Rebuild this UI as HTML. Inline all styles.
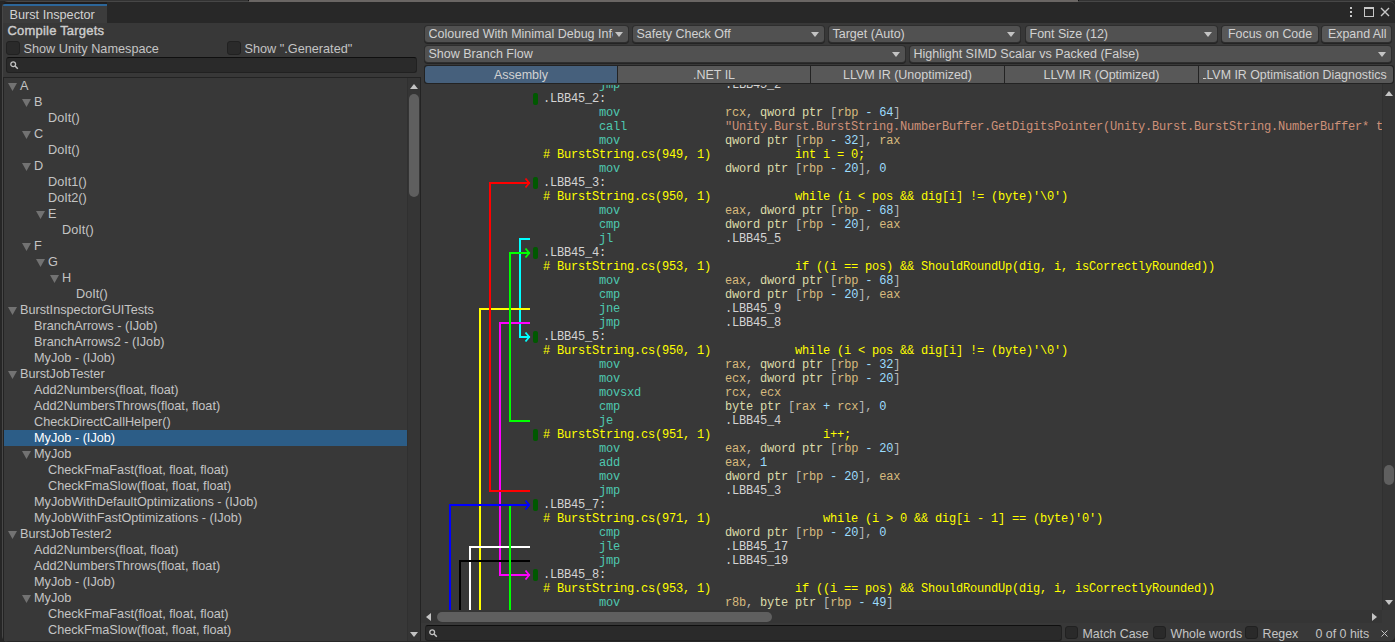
<!DOCTYPE html>
<html><head><meta charset="utf-8"><style>
html,body{margin:0;padding:0;width:1395px;height:642px;overflow:hidden;background:#232323}
.b{position:absolute}
.t{position:absolute;white-space:pre;line-height:20px;font-family:'Liberation Sans', sans-serif}
.m{position:absolute;white-space:pre;line-height:14px;font-size:12px;letter-spacing:-0.200px;font-family:'Liberation Mono', monospace}
svg{display:block}
</style></head><body>
<div class="b" style="left:0px;top:0px;width:1395px;height:642px;background:#262626"></div><div class="b" style="left:0px;top:0px;width:248px;height:1px;background:#333333"></div><div class="b" style="left:248px;top:0px;width:1px;height:2px;background:#111"></div><div class="b" style="left:249px;top:0px;width:829px;height:2px;background:#6a6664"></div><div class="b" style="left:1078px;top:0px;width:1px;height:1px;background:#111"></div><div class="b" style="left:1079px;top:0px;width:316px;height:1px;background:#333333"></div><div class="b" style="left:2px;top:1px;width:1393px;height:641px;background:#282828;border-left:1px solid #474747;border-top:1px solid #474747;border-radius:6px 6px 5px 6px;box-sizing:border-box"></div><div class="b" style="left:249px;top:1px;width:829px;height:1px;background:#6a6664"></div><div class="b" style="left:3px;top:23px;width:1392px;height:618px;background:#383838;border-radius:0 0 5px 5px"></div><div class="b" style="left:3px;top:2px;width:104px;height:21px;background:#3c3c3c;border-radius:5px 0 0 0"></div><div class="b" style="left:3px;top:2px;width:104px;height:2px;background:#1f1d1d;border-radius:5px 0 0 0"></div><div class="b" style="left:3px;top:4px;width:104px;height:2px;background:#2c6699;border-radius:2px 0 0 0"></div><div class="t" style="left:9.5px;top:4.60px;font-size:12.7px;color:#d2d2d2;font-weight:400;">Burst Inspector</div><div class="b" style="left:1350px;top:7px;width:2px;height:2px;background:#c8c8c8"></div><div class="b" style="left:1350px;top:11px;width:2px;height:2px;background:#c8c8c8"></div><div class="b" style="left:1350px;top:15px;width:2px;height:2px;background:#c8c8c8"></div><div class="b" style="left:1364px;top:7px;width:10px;height:10px;border:1px solid #c8c8c8;border-top-width:2px;box-sizing:border-box"></div><svg class="b" style="left:1380px;top:7px" width="10" height="10"><path d="M1 1L9 9M9 1L1 9" stroke="#c8c8c8" stroke-width="1.4"/></svg><div class="t" style="left:7.5px;top:20.50px;font-size:13px;color:#cccccc;font-weight:400;letter-spacing:0.2px;-webkit-text-stroke:0.4px #cccccc">Compile Targets</div><div class="b" style="left:6px;top:41px;width:14px;height:14px;background:#2a2a2a;border:1px solid #212121;box-sizing:border-box;border-radius:3px"></div><div class="t" style="left:23.5px;top:38.60px;font-size:12.7px;color:#c4c4c4;font-weight:400;">Show Unity Namespace</div><div class="b" style="left:227px;top:41px;width:14px;height:14px;background:#2a2a2a;border:1px solid #212121;box-sizing:border-box;border-radius:3px"></div><div class="t" style="left:244.5px;top:38.60px;font-size:12.7px;color:#c4c4c4;font-weight:400;">Show &quot;.Generated&quot;</div><div class="b" style="left:6px;top:57px;width:411px;height:16px;background:#2a2a2a;border:1px solid #212121;border-top-color:#0f0f0f;box-sizing:border-box;border-radius:3px"></div><svg class="b" style="left:10px;top:61px" width="9" height="9"><circle cx="3.2" cy="3.2" r="2.4" fill="none" stroke="#c4c4c4" stroke-width="1.3"/><path d="M4.8 4.8L7.8 7.8" stroke="#c4c4c4" stroke-width="1.5"/></svg><div class="b" style="left:3px;top:77px;width:418px;height:564px;background:#383838;border-top:1px solid #232323;border-left:1px solid #232323;border-right:1px solid #232323;box-sizing:border-box"></div><div class="b" style="left:4px;top:78px;width:403px;height:563px;overflow:hidden"><svg class="b" style="left:4px;top:5px" width="9" height="8"><path d="M0 0H9L4.5 8Z" fill="#727272"/></svg><div class="t" style="left:16px;top:-2.40px;font-size:12.7px;color:#c4c4c4;font-weight:400;">A</div><svg class="b" style="left:18px;top:21px" width="9" height="8"><path d="M0 0H9L4.5 8Z" fill="#727272"/></svg><div class="t" style="left:30px;top:13.60px;font-size:12.7px;color:#c4c4c4;font-weight:400;">B</div><div class="t" style="left:44px;top:29.60px;font-size:12.7px;color:#c4c4c4;font-weight:400;">DoIt()</div><svg class="b" style="left:18px;top:53px" width="9" height="8"><path d="M0 0H9L4.5 8Z" fill="#727272"/></svg><div class="t" style="left:30px;top:45.60px;font-size:12.7px;color:#c4c4c4;font-weight:400;">C</div><div class="t" style="left:44px;top:61.60px;font-size:12.7px;color:#c4c4c4;font-weight:400;">DoIt()</div><svg class="b" style="left:18px;top:85px" width="9" height="8"><path d="M0 0H9L4.5 8Z" fill="#727272"/></svg><div class="t" style="left:30px;top:77.60px;font-size:12.7px;color:#c4c4c4;font-weight:400;">D</div><div class="t" style="left:44px;top:93.60px;font-size:12.7px;color:#c4c4c4;font-weight:400;">DoIt1()</div><div class="t" style="left:44px;top:109.60px;font-size:12.7px;color:#c4c4c4;font-weight:400;">DoIt2()</div><svg class="b" style="left:32px;top:133px" width="9" height="8"><path d="M0 0H9L4.5 8Z" fill="#727272"/></svg><div class="t" style="left:44px;top:125.60px;font-size:12.7px;color:#c4c4c4;font-weight:400;">E</div><div class="t" style="left:58px;top:141.60px;font-size:12.7px;color:#c4c4c4;font-weight:400;">DoIt()</div><svg class="b" style="left:18px;top:165px" width="9" height="8"><path d="M0 0H9L4.5 8Z" fill="#727272"/></svg><div class="t" style="left:30px;top:157.60px;font-size:12.7px;color:#c4c4c4;font-weight:400;">F</div><svg class="b" style="left:32px;top:181px" width="9" height="8"><path d="M0 0H9L4.5 8Z" fill="#727272"/></svg><div class="t" style="left:44px;top:173.60px;font-size:12.7px;color:#c4c4c4;font-weight:400;">G</div><svg class="b" style="left:46px;top:197px" width="9" height="8"><path d="M0 0H9L4.5 8Z" fill="#727272"/></svg><div class="t" style="left:58px;top:189.60px;font-size:12.7px;color:#c4c4c4;font-weight:400;">H</div><div class="t" style="left:72px;top:205.60px;font-size:12.7px;color:#c4c4c4;font-weight:400;">DoIt()</div><svg class="b" style="left:4px;top:229px" width="9" height="8"><path d="M0 0H9L4.5 8Z" fill="#727272"/></svg><div class="t" style="left:16px;top:221.60px;font-size:12.7px;color:#c4c4c4;font-weight:400;">BurstInspectorGUITests</div><div class="t" style="left:30px;top:237.60px;font-size:12.7px;color:#c4c4c4;font-weight:400;">BranchArrows - (IJob)</div><div class="t" style="left:30px;top:253.60px;font-size:12.7px;color:#c4c4c4;font-weight:400;">BranchArrows2 - (IJob)</div><div class="t" style="left:30px;top:269.60px;font-size:12.7px;color:#c4c4c4;font-weight:400;">MyJob - (IJob)</div><svg class="b" style="left:4px;top:293px" width="9" height="8"><path d="M0 0H9L4.5 8Z" fill="#727272"/></svg><div class="t" style="left:16px;top:285.60px;font-size:12.7px;color:#c4c4c4;font-weight:400;">BurstJobTester</div><div class="t" style="left:30px;top:301.60px;font-size:12.7px;color:#c4c4c4;font-weight:400;">Add2Numbers(float, float)</div><div class="t" style="left:30px;top:317.60px;font-size:12.7px;color:#c4c4c4;font-weight:400;">Add2NumbersThrows(float, float)</div><div class="t" style="left:30px;top:333.60px;font-size:12.7px;color:#c4c4c4;font-weight:400;">CheckDirectCallHelper()</div><div class="b" style="left:0px;top:352px;width:403px;height:16px;background:#2c5d87"></div><div class="t" style="left:30px;top:349.60px;font-size:12.7px;color:#ffffff;font-weight:400;">MyJob - (IJob)</div><svg class="b" style="left:18px;top:373px" width="9" height="8"><path d="M0 0H9L4.5 8Z" fill="#727272"/></svg><div class="t" style="left:30px;top:365.60px;font-size:12.7px;color:#c4c4c4;font-weight:400;">MyJob</div><div class="t" style="left:44px;top:381.60px;font-size:12.7px;color:#c4c4c4;font-weight:400;">CheckFmaFast(float, float, float)</div><div class="t" style="left:44px;top:397.60px;font-size:12.7px;color:#c4c4c4;font-weight:400;">CheckFmaSlow(float, float, float)</div><div class="t" style="left:30px;top:413.60px;font-size:12.7px;color:#c4c4c4;font-weight:400;">MyJobWithDefaultOptimizations - (IJob)</div><div class="t" style="left:30px;top:429.60px;font-size:12.7px;color:#c4c4c4;font-weight:400;">MyJobWithFastOptimizations - (IJob)</div><svg class="b" style="left:4px;top:453px" width="9" height="8"><path d="M0 0H9L4.5 8Z" fill="#727272"/></svg><div class="t" style="left:16px;top:445.60px;font-size:12.7px;color:#c4c4c4;font-weight:400;">BurstJobTester2</div><div class="t" style="left:30px;top:461.60px;font-size:12.7px;color:#c4c4c4;font-weight:400;">Add2Numbers(float, float)</div><div class="t" style="left:30px;top:477.60px;font-size:12.7px;color:#c4c4c4;font-weight:400;">Add2NumbersThrows(float, float)</div><div class="t" style="left:30px;top:493.60px;font-size:12.7px;color:#c4c4c4;font-weight:400;">MyJob - (IJob)</div><svg class="b" style="left:18px;top:517px" width="9" height="8"><path d="M0 0H9L4.5 8Z" fill="#727272"/></svg><div class="t" style="left:30px;top:509.60px;font-size:12.7px;color:#c4c4c4;font-weight:400;">MyJob</div><div class="t" style="left:44px;top:525.60px;font-size:12.7px;color:#c4c4c4;font-weight:400;">CheckFmaFast(float, float, float)</div><div class="t" style="left:44px;top:541.60px;font-size:12.7px;color:#c4c4c4;font-weight:400;">CheckFmaSlow(float, float, float)</div><div class="t" style="left:30px;top:557.60px;font-size:12.7px;color:#c4c4c4;font-weight:400;">MyJobWithFastOptimizations - (IJob)</div></div><div class="b" style="left:407px;top:78px;width:13px;height:563px;background:#353535;border-left:1px solid #303030;box-sizing:border-box"></div><svg class="b" style="left:410px;top:84px" width="8" height="5"><path d="M0 5H8L4 0Z" fill="#c4c4c4"/></svg><div class="b" style="left:409px;top:94px;width:10px;height:103px;background:#5f5f5f;border-radius:5px"></div><svg class="b" style="left:410px;top:632px" width="8" height="5"><path d="M0 0H8L4 5Z" fill="#c4c4c4"/></svg><div class="b" style="left:633px;top:26px;width:191px;height:16px;background:#515151;box-shadow:0 0 0 1px #2e2e2e,0 1px 0 1px #242424;border-radius:3px"></div><div class="t" style="left:636.5px;top:23.67px;font-size:12.5px;color:#d2d2d2;font-weight:400;">Safety Check Off</div><svg class="b" style="left:811px;top:32px" width="8" height="5"><path d="M0 0H8L4 5Z" fill="#c4c4c4"/></svg><div class="b" style="left:829px;top:26px;width:191px;height:16px;background:#515151;box-shadow:0 0 0 1px #2e2e2e,0 1px 0 1px #242424;border-radius:3px"></div><div class="t" style="left:832.5px;top:23.67px;font-size:12.5px;color:#d2d2d2;font-weight:400;">Target (Auto)</div><svg class="b" style="left:1007px;top:32px" width="8" height="5"><path d="M0 0H8L4 5Z" fill="#c4c4c4"/></svg><div class="b" style="left:1026px;top:26px;width:191px;height:16px;background:#515151;box-shadow:0 0 0 1px #2e2e2e,0 1px 0 1px #242424;border-radius:3px"></div><div class="t" style="left:1029.5px;top:23.67px;font-size:12.5px;color:#d2d2d2;font-weight:400;">Font Size (12)</div><svg class="b" style="left:1204px;top:32px" width="8" height="5"><path d="M0 0H8L4 5Z" fill="#c4c4c4"/></svg><div class="b" style="left:1222px;top:26px;width:96px;height:16px;background:#585858;box-shadow:0 0 0 1px #2e2e2e,0 1px 0 1px #242424;border-radius:3px"></div><div class="t" style="left:1228.0px;top:23.70px;font-size:12.4px;color:#d2d2d2;font-weight:400;">Focus on Code</div><div class="b" style="left:1322px;top:26px;width:69px;height:16px;background:#585858;box-shadow:0 0 0 1px #2e2e2e,0 1px 0 1px #242424;border-radius:3px"></div><div class="t" style="left:1328.0px;top:23.70px;font-size:12.4px;color:#d2d2d2;font-weight:400;">Expand All</div><div class="b" style="left:425px;top:26px;width:203px;height:16px;background:#515151;box-shadow:0 0 0 1px #2e2e2e,0 1px 0 1px #242424;border-radius:3px"></div><div class="b" style="left:428.5px;top:26px;width:184.5px;height:16px;overflow:hidden"><div class="t" style="left:0px;top:-2.33px;font-size:12.5px;color:#d2d2d2;font-weight:400;">Coloured With Minimal Debug Info</div></div><svg class="b" style="left:615px;top:32px" width="8" height="5"><path d="M0 0H8L4 5Z" fill="#c4c4c4"/></svg><div class="b" style="left:425px;top:46px;width:480px;height:16px;background:#515151;box-shadow:0 0 0 1px #2e2e2e,0 1px 0 1px #242424;border-radius:3px"></div><div class="t" style="left:428.5px;top:43.67px;font-size:12.5px;color:#d2d2d2;font-weight:400;">Show Branch Flow</div><svg class="b" style="left:892px;top:52px" width="8" height="5"><path d="M0 0H8L4 5Z" fill="#c4c4c4"/></svg><div class="b" style="left:910px;top:46px;width:481px;height:16px;background:#515151;box-shadow:0 0 0 1px #2e2e2e,0 1px 0 1px #242424;border-radius:3px"></div><div class="t" style="left:913.5px;top:43.67px;font-size:12.5px;color:#d2d2d2;font-weight:400;">Highlight SIMD Scalar vs Packed (False)</div><svg class="b" style="left:1378px;top:52px" width="8" height="5"><path d="M0 0H8L4 5Z" fill="#c4c4c4"/></svg><div class="b" style="left:424px;top:65px;width:970px;height:19px;background:#232323;border-radius:3px"></div><div class="b" style="left:425px;top:66px;width:192px;height:17px;background:#46607c;border-radius:3px 0 0 3px"></div><div class="b" style="left:425px;top:66px;width:192px;height:17px;overflow:hidden;text-align:center"><div style="position:absolute;left:0;right:0;top:-1.40px;line-height:20px;font-size:12.5px;color:#d2d2d2;white-space:pre;font-family:'Liberation Sans', sans-serif">Assembly</div></div><div class="b" style="left:618px;top:66px;width:192px;height:17px;background:#585858;border-radius:0"></div><div class="b" style="left:618px;top:66px;width:192px;height:17px;overflow:hidden;text-align:center"><div style="position:absolute;left:0;right:0;top:-1.40px;line-height:20px;font-size:12.5px;color:#d2d2d2;white-space:pre;font-family:'Liberation Sans', sans-serif">.NET IL</div></div><div class="b" style="left:811px;top:66px;width:193px;height:17px;background:#585858;border-radius:0"></div><div class="b" style="left:811px;top:66px;width:193px;height:17px;overflow:hidden;text-align:center"><div style="position:absolute;left:0;right:0;top:-1.40px;line-height:20px;font-size:12.5px;color:#d2d2d2;white-space:pre;font-family:'Liberation Sans', sans-serif">LLVM IR (Unoptimized)</div></div><div class="b" style="left:1005px;top:66px;width:193px;height:17px;background:#585858;border-radius:0"></div><div class="b" style="left:1005px;top:66px;width:193px;height:17px;overflow:hidden;text-align:center"><div style="position:absolute;left:0;right:0;top:-1.40px;line-height:20px;font-size:12.5px;color:#d2d2d2;white-space:pre;font-family:'Liberation Sans', sans-serif">LLVM IR (Optimized)</div></div><div class="b" style="left:1199px;top:66px;width:194px;height:17px;background:#585858;border-radius:0 3px 3px 0"></div><div class="b" style="left:1203px;top:66px;width:186px;height:17px;overflow:hidden"><div class="t" style="left:-3.5px;top:-1.30px;font-size:12.4px;color:#d2d2d2;font-weight:400;">LLVM IR Optimisation Diagnostics</div></div><div class="b" style="left:421px;top:85px;width:961px;height:525px;overflow:hidden;background:#383838"><div class="m" style="left:178.0px;top:-7px"><span style="color:#4ec9b0">jmp</span></div><div class="m" style="left:304.0px;top:-7px"><span style="color:#d4d4d4">.LBB45_2</span></div><div class="b" style="left:112px;top:8px;width:5px;height:12px;background:#005800;border-radius:2px"></div><div class="m" style="left:122px;top:7px"><span style="color:#d4d4d4">.LBB45_2:</span></div><div class="m" style="left:178.0px;top:21px"><span style="color:#4ec9b0">mov</span></div><div class="m" style="left:304.0px;top:21px"><span style="color:#d7ba7d">rcx</span><span style="color:#b8b8b8">,</span> <span style="color:#dcdcaa">qword</span> <span style="color:#dcdcaa">ptr</span> <span style="color:#b8b8b8">[</span><span style="color:#d7ba7d">rbp</span> <span style="color:#9cdcfe">-</span> <span style="color:#9cdcfe">64</span><span style="color:#b8b8b8">]</span></div><div class="m" style="left:178.0px;top:35px"><span style="color:#4ec9b0">call</span></div><div class="m" style="left:304.0px;top:35px"><span style="color:#ce9178">&quot;Unity.Burst.BurstString.NumberBuffer.GetDigitsPointer(Unity.Burst.BurstString.NumberBuffer* this)&quot;</span></div><div class="m" style="left:178.0px;top:49px"><span style="color:#4ec9b0">mov</span></div><div class="m" style="left:304.0px;top:49px"><span style="color:#dcdcaa">qword</span> <span style="color:#dcdcaa">ptr</span> <span style="color:#b8b8b8">[</span><span style="color:#d7ba7d">rbp</span> <span style="color:#9cdcfe">-</span> <span style="color:#9cdcfe">32</span><span style="color:#b8b8b8">]</span><span style="color:#b8b8b8">,</span> <span style="color:#d7ba7d">rax</span></div><div class="m" style="left:122px;top:63px"><span style="color:#ffff00"># BurstString.cs(949, 1)            int i = 0;</span></div><div class="m" style="left:178.0px;top:77px"><span style="color:#4ec9b0">mov</span></div><div class="m" style="left:304.0px;top:77px"><span style="color:#dcdcaa">dword</span> <span style="color:#dcdcaa">ptr</span> <span style="color:#b8b8b8">[</span><span style="color:#d7ba7d">rbp</span> <span style="color:#9cdcfe">-</span> <span style="color:#9cdcfe">20</span><span style="color:#b8b8b8">]</span><span style="color:#b8b8b8">,</span> <span style="color:#9cdcfe">0</span></div><div class="b" style="left:112px;top:92px;width:5px;height:12px;background:#005800;border-radius:2px"></div><div class="m" style="left:122px;top:91px"><span style="color:#d4d4d4">.LBB45_3:</span></div><div class="m" style="left:122px;top:105px"><span style="color:#ffff00"># BurstString.cs(950, 1)            while (i &lt; pos &amp;&amp; dig[i] != (byte)&#x27;\0&#x27;)</span></div><div class="m" style="left:178.0px;top:119px"><span style="color:#4ec9b0">mov</span></div><div class="m" style="left:304.0px;top:119px"><span style="color:#d7ba7d">eax</span><span style="color:#b8b8b8">,</span> <span style="color:#dcdcaa">dword</span> <span style="color:#dcdcaa">ptr</span> <span style="color:#b8b8b8">[</span><span style="color:#d7ba7d">rbp</span> <span style="color:#9cdcfe">-</span> <span style="color:#9cdcfe">68</span><span style="color:#b8b8b8">]</span></div><div class="m" style="left:178.0px;top:133px"><span style="color:#4ec9b0">cmp</span></div><div class="m" style="left:304.0px;top:133px"><span style="color:#dcdcaa">dword</span> <span style="color:#dcdcaa">ptr</span> <span style="color:#b8b8b8">[</span><span style="color:#d7ba7d">rbp</span> <span style="color:#9cdcfe">-</span> <span style="color:#9cdcfe">20</span><span style="color:#b8b8b8">]</span><span style="color:#b8b8b8">,</span> <span style="color:#d7ba7d">eax</span></div><div class="m" style="left:178.0px;top:147px"><span style="color:#4ec9b0">jl</span></div><div class="m" style="left:304.0px;top:147px"><span style="color:#d4d4d4">.LBB45_5</span></div><div class="b" style="left:112px;top:162px;width:5px;height:12px;background:#005800;border-radius:2px"></div><div class="m" style="left:122px;top:161px"><span style="color:#d4d4d4">.LBB45_4:</span></div><div class="m" style="left:122px;top:175px"><span style="color:#ffff00"># BurstString.cs(953, 1)            if ((i == pos) &amp;&amp; ShouldRoundUp(dig, i, isCorrectlyRounded))</span></div><div class="m" style="left:178.0px;top:189px"><span style="color:#4ec9b0">mov</span></div><div class="m" style="left:304.0px;top:189px"><span style="color:#d7ba7d">eax</span><span style="color:#b8b8b8">,</span> <span style="color:#dcdcaa">dword</span> <span style="color:#dcdcaa">ptr</span> <span style="color:#b8b8b8">[</span><span style="color:#d7ba7d">rbp</span> <span style="color:#9cdcfe">-</span> <span style="color:#9cdcfe">68</span><span style="color:#b8b8b8">]</span></div><div class="m" style="left:178.0px;top:203px"><span style="color:#4ec9b0">cmp</span></div><div class="m" style="left:304.0px;top:203px"><span style="color:#dcdcaa">dword</span> <span style="color:#dcdcaa">ptr</span> <span style="color:#b8b8b8">[</span><span style="color:#d7ba7d">rbp</span> <span style="color:#9cdcfe">-</span> <span style="color:#9cdcfe">20</span><span style="color:#b8b8b8">]</span><span style="color:#b8b8b8">,</span> <span style="color:#d7ba7d">eax</span></div><div class="m" style="left:178.0px;top:217px"><span style="color:#4ec9b0">jne</span></div><div class="m" style="left:304.0px;top:217px"><span style="color:#d4d4d4">.LBB45_9</span></div><div class="m" style="left:178.0px;top:231px"><span style="color:#4ec9b0">jmp</span></div><div class="m" style="left:304.0px;top:231px"><span style="color:#d4d4d4">.LBB45_8</span></div><div class="b" style="left:112px;top:246px;width:5px;height:12px;background:#005800;border-radius:2px"></div><div class="m" style="left:122px;top:245px"><span style="color:#d4d4d4">.LBB45_5:</span></div><div class="m" style="left:122px;top:259px"><span style="color:#ffff00"># BurstString.cs(950, 1)            while (i &lt; pos &amp;&amp; dig[i] != (byte)&#x27;\0&#x27;)</span></div><div class="m" style="left:178.0px;top:273px"><span style="color:#4ec9b0">mov</span></div><div class="m" style="left:304.0px;top:273px"><span style="color:#d7ba7d">rax</span><span style="color:#b8b8b8">,</span> <span style="color:#dcdcaa">qword</span> <span style="color:#dcdcaa">ptr</span> <span style="color:#b8b8b8">[</span><span style="color:#d7ba7d">rbp</span> <span style="color:#9cdcfe">-</span> <span style="color:#9cdcfe">32</span><span style="color:#b8b8b8">]</span></div><div class="m" style="left:178.0px;top:287px"><span style="color:#4ec9b0">mov</span></div><div class="m" style="left:304.0px;top:287px"><span style="color:#d7ba7d">ecx</span><span style="color:#b8b8b8">,</span> <span style="color:#dcdcaa">dword</span> <span style="color:#dcdcaa">ptr</span> <span style="color:#b8b8b8">[</span><span style="color:#d7ba7d">rbp</span> <span style="color:#9cdcfe">-</span> <span style="color:#9cdcfe">20</span><span style="color:#b8b8b8">]</span></div><div class="m" style="left:178.0px;top:301px"><span style="color:#4ec9b0">movsxd</span></div><div class="m" style="left:304.0px;top:301px"><span style="color:#d7ba7d">rcx</span><span style="color:#b8b8b8">,</span> <span style="color:#d7ba7d">ecx</span></div><div class="m" style="left:178.0px;top:315px"><span style="color:#4ec9b0">cmp</span></div><div class="m" style="left:304.0px;top:315px"><span style="color:#dcdcaa">byte</span> <span style="color:#dcdcaa">ptr</span> <span style="color:#b8b8b8">[</span><span style="color:#d7ba7d">rax</span> <span style="color:#9cdcfe">+</span> <span style="color:#d7ba7d">rcx</span><span style="color:#b8b8b8">]</span><span style="color:#b8b8b8">,</span> <span style="color:#9cdcfe">0</span></div><div class="m" style="left:178.0px;top:329px"><span style="color:#4ec9b0">je</span></div><div class="m" style="left:304.0px;top:329px"><span style="color:#d4d4d4">.LBB45_4</span></div><div class="m" style="left:122px;top:343px"><span style="color:#ffff00"># BurstString.cs(951, 1)                i++;</span></div><div class="m" style="left:178.0px;top:357px"><span style="color:#4ec9b0">mov</span></div><div class="m" style="left:304.0px;top:357px"><span style="color:#d7ba7d">eax</span><span style="color:#b8b8b8">,</span> <span style="color:#dcdcaa">dword</span> <span style="color:#dcdcaa">ptr</span> <span style="color:#b8b8b8">[</span><span style="color:#d7ba7d">rbp</span> <span style="color:#9cdcfe">-</span> <span style="color:#9cdcfe">20</span><span style="color:#b8b8b8">]</span></div><div class="m" style="left:178.0px;top:371px"><span style="color:#4ec9b0">add</span></div><div class="m" style="left:304.0px;top:371px"><span style="color:#d7ba7d">eax</span><span style="color:#b8b8b8">,</span> <span style="color:#9cdcfe">1</span></div><div class="m" style="left:178.0px;top:385px"><span style="color:#4ec9b0">mov</span></div><div class="m" style="left:304.0px;top:385px"><span style="color:#dcdcaa">dword</span> <span style="color:#dcdcaa">ptr</span> <span style="color:#b8b8b8">[</span><span style="color:#d7ba7d">rbp</span> <span style="color:#9cdcfe">-</span> <span style="color:#9cdcfe">20</span><span style="color:#b8b8b8">]</span><span style="color:#b8b8b8">,</span> <span style="color:#d7ba7d">eax</span></div><div class="m" style="left:178.0px;top:399px"><span style="color:#4ec9b0">jmp</span></div><div class="m" style="left:304.0px;top:399px"><span style="color:#d4d4d4">.LBB45_3</span></div><div class="b" style="left:112px;top:414px;width:5px;height:12px;background:#005800;border-radius:2px"></div><div class="m" style="left:122px;top:413px"><span style="color:#d4d4d4">.LBB45_7:</span></div><div class="m" style="left:122px;top:427px"><span style="color:#ffff00"># BurstString.cs(971, 1)                while (i &gt; 0 &amp;&amp; dig[i - 1] == (byte)&#x27;0&#x27;)</span></div><div class="m" style="left:178.0px;top:441px"><span style="color:#4ec9b0">cmp</span></div><div class="m" style="left:304.0px;top:441px"><span style="color:#dcdcaa">dword</span> <span style="color:#dcdcaa">ptr</span> <span style="color:#b8b8b8">[</span><span style="color:#d7ba7d">rbp</span> <span style="color:#9cdcfe">-</span> <span style="color:#9cdcfe">20</span><span style="color:#b8b8b8">]</span><span style="color:#b8b8b8">,</span> <span style="color:#9cdcfe">0</span></div><div class="m" style="left:178.0px;top:455px"><span style="color:#4ec9b0">jle</span></div><div class="m" style="left:304.0px;top:455px"><span style="color:#d4d4d4">.LBB45_17</span></div><div class="m" style="left:178.0px;top:469px"><span style="color:#4ec9b0">jmp</span></div><div class="m" style="left:304.0px;top:469px"><span style="color:#d4d4d4">.LBB45_19</span></div><div class="b" style="left:112px;top:484px;width:5px;height:12px;background:#005800;border-radius:2px"></div><div class="m" style="left:122px;top:483px"><span style="color:#d4d4d4">.LBB45_8:</span></div><div class="m" style="left:122px;top:497px"><span style="color:#ffff00"># BurstString.cs(953, 1)            if ((i == pos) &amp;&amp; ShouldRoundUp(dig, i, isCorrectlyRounded))</span></div><div class="m" style="left:178.0px;top:511px"><span style="color:#4ec9b0">mov</span></div><div class="m" style="left:304.0px;top:511px"><span style="color:#d7ba7d">r8b</span><span style="color:#b8b8b8">,</span> <span style="color:#dcdcaa">byte</span> <span style="color:#dcdcaa">ptr</span> <span style="color:#b8b8b8">[</span><span style="color:#d7ba7d">rbp</span> <span style="color:#9cdcfe">-</span> <span style="color:#9cdcfe">49</span><span style="color:#b8b8b8">]</span></div><div class="m" style="left:178.0px;top:525px"><span style="color:#4ec9b0">movzx</span></div><div class="m" style="left:304.0px;top:525px"><span style="color:#d7ba7d">ecx</span><span style="color:#b8b8b8">,</span> <span style="color:#d7ba7d">r8b</span></div><div class="b" style="left:112px;top:344px;width:5px;height:12px;background:#005800;border-radius:2px"></div><svg class="b" style="left:0;top:0" width="961" height="525"><rect x="98" y="153" width="11" height="2" fill="#00ffff"/><rect x="98" y="251" width="11" height="2" fill="#00ffff"/><rect x="98" y="153" width="2" height="100" fill="#00ffff"/><polyline points="104.5,247.5 108.2,252 104.5,256.5" fill="none" stroke="#00ffff" stroke-width="1.8"/><rect x="58" y="223" width="51" height="2" fill="#ffff00"/><rect x="58" y="223" width="2" height="314" fill="#ffff00"/><rect x="78" y="237" width="31" height="2" fill="#ff00ff"/><rect x="78" y="489" width="31" height="2" fill="#ff00ff"/><rect x="78" y="237" width="2" height="254" fill="#ff00ff"/><polyline points="104.5,485.5 108.2,490 104.5,494.5" fill="none" stroke="#ff00ff" stroke-width="1.8"/><rect x="68" y="97" width="41" height="2" fill="#ff0000"/><rect x="68" y="405" width="41" height="2" fill="#ff0000"/><rect x="68" y="97" width="2" height="310" fill="#ff0000"/><polyline points="104.5,93.5 108.2,98 104.5,102.5" fill="none" stroke="#ff0000" stroke-width="1.8"/><rect x="48" y="461" width="61" height="2" fill="#ffffff"/><rect x="48" y="461" width="2" height="76" fill="#ffffff"/><rect x="38" y="475" width="71" height="2" fill="#000000"/><rect x="38" y="475" width="2" height="62" fill="#000000"/><rect x="88" y="167" width="21" height="2" fill="#00ff00"/><rect x="88" y="335" width="21" height="2" fill="#00ff00"/><rect x="88" y="167" width="2" height="170" fill="#00ff00"/><polyline points="104.5,163.5 108.2,168 104.5,172.5" fill="none" stroke="#00ff00" stroke-width="1.8"/><rect x="88" y="419" width="2" height="600" fill="#00ff00"/><rect x="28" y="419" width="81" height="2" fill="#0000ff"/><rect x="28" y="419" width="2" height="118" fill="#0000ff"/><polyline points="104.5,415.5 108.2,420 104.5,424.5" fill="none" stroke="#0000ff" stroke-width="1.8"/></svg></div><div class="b" style="left:1382px;top:84px;width:13px;height:526px;background:#353535;border-left:1px solid #303030;box-sizing:border-box"></div><svg class="b" style="left:1385px;top:91px" width="8" height="5"><path d="M0 5H8L4 0Z" fill="#c4c4c4"/></svg><div class="b" style="left:1384px;top:465px;width:10px;height:20px;background:#5f5f5f;border-radius:5px"></div><svg class="b" style="left:1385px;top:600px" width="8" height="5"><path d="M0 0H8L4 5Z" fill="#c4c4c4"/></svg><div class="b" style="left:421px;top:610px;width:961px;height:13px;background:#353535"></div><svg class="b" style="left:426px;top:613px" width="5" height="8"><path d="M5 0V8L0 4Z" fill="#c4c4c4"/></svg><div class="b" style="left:437px;top:612px;width:335px;height:10px;background:#5f5f5f;border-radius:5px"></div><svg class="b" style="left:1372px;top:613px" width="5" height="8"><path d="M0 0V8L5 4Z" fill="#c4c4c4"/></svg><div class="b" style="left:425px;top:625px;width:637px;height:16px;background:#2a2a2a;border:1px solid #212121;border-top-color:#0f0f0f;box-sizing:border-box;border-radius:3px"></div><svg class="b" style="left:429px;top:629px" width="9" height="9"><circle cx="3.2" cy="3.2" r="2.4" fill="none" stroke="#c4c4c4" stroke-width="1.3"/><path d="M4.8 4.8L7.8 7.8" stroke="#c4c4c4" stroke-width="1.5"/></svg><div class="b" style="left:1065px;top:626px;width:13px;height:13px;background:#2a2a2a;border:1px solid #212121;box-sizing:border-box;border-radius:3px"></div><div class="t" style="left:1082.5px;top:623.70px;font-size:12.4px;color:#c4c4c4;font-weight:400;">Match Case</div><div class="b" style="left:1153px;top:626px;width:13px;height:13px;background:#2a2a2a;border:1px solid #212121;box-sizing:border-box;border-radius:3px"></div><div class="t" style="left:1170.5px;top:623.70px;font-size:12.4px;color:#c4c4c4;font-weight:400;">Whole words</div><div class="b" style="left:1245px;top:626px;width:13px;height:13px;background:#2a2a2a;border:1px solid #212121;box-sizing:border-box;border-radius:3px"></div><div class="t" style="left:1262.5px;top:623.70px;font-size:12.4px;color:#c4c4c4;font-weight:400;">Regex</div><div class="t" style="left:1315.5px;top:623.70px;font-size:12.4px;color:#c4c4c4;font-weight:400;">0 of 0 hits</div><svg class="b" style="left:1381px;top:630px" width="7" height="7"><path d="M0.5 0.5L6.5 6.5M6.5 0.5L0.5 6.5" stroke="#c4c4c4" stroke-width="1"/></svg>
</body></html>
